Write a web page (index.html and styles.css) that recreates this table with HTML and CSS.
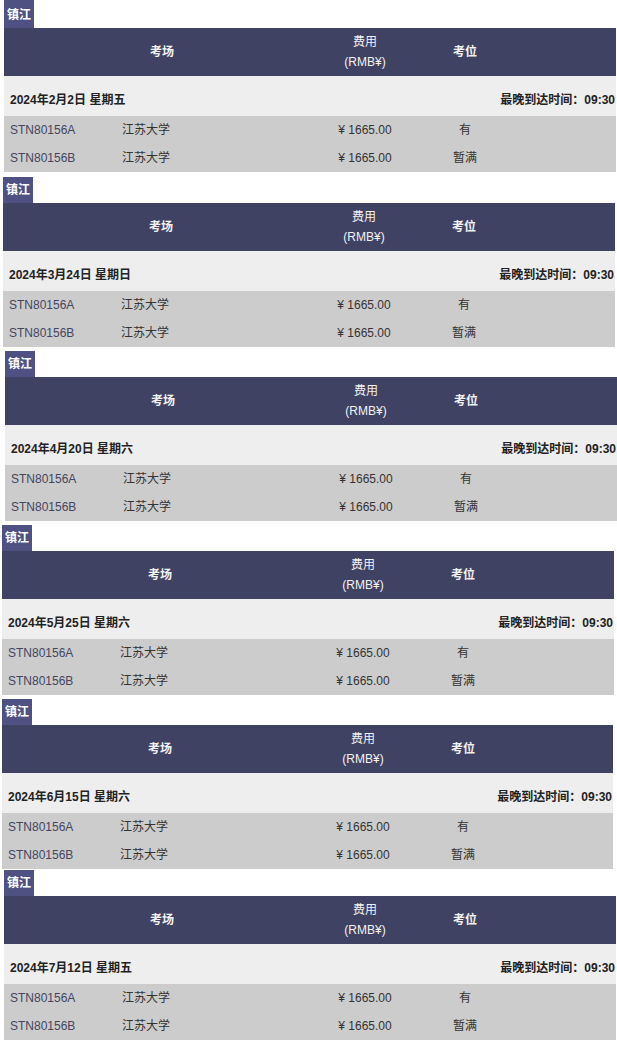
FILE: index.html
```html
<!doctype html>
<html lang="zh-CN">
  <head>
    <meta charset="UTF-8" />
    <meta name="viewport" content="width=device-width, initial-scale=1.0" />
    <title>考试日期</title>
    <link rel="stylesheet" href="styles.css">
  </head>
  <body>
    <section class="region">
      <div class="region-tag">镇江</div>
      <table class="exam-table">
        <colgroup><col class="col-code"><col class="col-name"><col class="col-fee"><col class="col-seat"><col></colgroup>
        <thead>
          <tr><th colspan="2">考场</th><th>费用<br>(RMB¥)</th><th>考位</th><th></th></tr>
        </thead>
        <tbody>
          <tr class="date-row"><td colspan="3">2024年2月2日 星期五</td><td colspan="2" class="deadline">最晚到达时间：09:30</td></tr>
          <tr><td class="code">STN80156A</td><td>江苏大学</td><td class="center">¥ 1665.00</td><td class="center">有</td><td></td></tr>
          <tr><td class="code">STN80156B</td><td>江苏大学</td><td class="center">¥ 1665.00</td><td class="center">暂满</td><td></td></tr>
        </tbody>
      </table>
    </section>

    <section class="region">
      <div class="region-tag">镇江</div>
      <table class="exam-table">
        <colgroup><col class="col-code"><col class="col-name"><col class="col-fee"><col class="col-seat"><col></colgroup>
        <thead>
          <tr><th colspan="2">考场</th><th>费用<br>(RMB¥)</th><th>考位</th><th></th></tr>
        </thead>
        <tbody>
          <tr class="date-row"><td colspan="3">2024年3月24日 星期日</td><td colspan="2" class="deadline">最晚到达时间：09:30</td></tr>
          <tr><td class="code">STN80156A</td><td>江苏大学</td><td class="center">¥ 1665.00</td><td class="center">有</td><td></td></tr>
          <tr><td class="code">STN80156B</td><td>江苏大学</td><td class="center">¥ 1665.00</td><td class="center">暂满</td><td></td></tr>
        </tbody>
      </table>
    </section>

    <section class="region">
      <div class="region-tag">镇江</div>
      <table class="exam-table">
        <colgroup><col class="col-code"><col class="col-name"><col class="col-fee"><col class="col-seat"><col></colgroup>
        <thead>
          <tr><th colspan="2">考场</th><th>费用<br>(RMB¥)</th><th>考位</th><th></th></tr>
        </thead>
        <tbody>
          <tr class="date-row"><td colspan="3">2024年4月20日 星期六</td><td colspan="2" class="deadline">最晚到达时间：09:30</td></tr>
          <tr><td class="code">STN80156A</td><td>江苏大学</td><td class="center">¥ 1665.00</td><td class="center">有</td><td></td></tr>
          <tr><td class="code">STN80156B</td><td>江苏大学</td><td class="center">¥ 1665.00</td><td class="center">暂满</td><td></td></tr>
        </tbody>
      </table>
    </section>

    <section class="region">
      <div class="region-tag">镇江</div>
      <table class="exam-table">
        <colgroup><col class="col-code"><col class="col-name"><col class="col-fee"><col class="col-seat"><col></colgroup>
        <thead>
          <tr><th colspan="2">考场</th><th>费用<br>(RMB¥)</th><th>考位</th><th></th></tr>
        </thead>
        <tbody>
          <tr class="date-row"><td colspan="3">2024年5月25日 星期六</td><td colspan="2" class="deadline">最晚到达时间：09:30</td></tr>
          <tr><td class="code">STN80156A</td><td>江苏大学</td><td class="center">¥ 1665.00</td><td class="center">有</td><td></td></tr>
          <tr><td class="code">STN80156B</td><td>江苏大学</td><td class="center">¥ 1665.00</td><td class="center">暂满</td><td></td></tr>
        </tbody>
      </table>
    </section>

    <section class="region">
      <div class="region-tag">镇江</div>
      <table class="exam-table">
        <colgroup><col class="col-code"><col class="col-name"><col class="col-fee"><col class="col-seat"><col></colgroup>
        <thead>
          <tr><th colspan="2">考场</th><th>费用<br>(RMB¥)</th><th>考位</th><th></th></tr>
        </thead>
        <tbody>
          <tr class="date-row"><td colspan="3">2024年6月15日 星期六</td><td colspan="2" class="deadline">最晚到达时间：09:30</td></tr>
          <tr><td class="code">STN80156A</td><td>江苏大学</td><td class="center">¥ 1665.00</td><td class="center">有</td><td></td></tr>
          <tr><td class="code">STN80156B</td><td>江苏大学</td><td class="center">¥ 1665.00</td><td class="center">暂满</td><td></td></tr>
        </tbody>
      </table>
    </section>

    <section class="region">
      <div class="region-tag">镇江</div>
      <table class="exam-table">
        <colgroup><col class="col-code"><col class="col-name"><col class="col-fee"><col class="col-seat"><col></colgroup>
        <thead>
          <tr><th colspan="2">考场</th><th>费用<br>(RMB¥)</th><th>考位</th><th></th></tr>
        </thead>
        <tbody>
          <tr class="date-row"><td colspan="3">2024年7月12日 星期五</td><td colspan="2" class="deadline">最晚到达时间：09:30</td></tr>
          <tr><td class="code">STN80156A</td><td>江苏大学</td><td class="center">¥ 1665.00</td><td class="center">有</td><td></td></tr>
          <tr><td class="code">STN80156B</td><td>江苏大学</td><td class="center">¥ 1665.00</td><td class="center">暂满</td><td></td></tr>
        </tbody>
      </table>
    </section>
  </body>
</html>
```

FILE: styles.css
```css
body {
  margin: 0;
  font-family: "Liberation Sans", Arial, "Noto Sans CJK SC", sans-serif;
  font-size: 12px;
  color: #333;
  background-color: #fff;
}
.region {
  width: 612px;
  margin: 4px 0 0 4px;
}
.region:nth-child(1) { margin-top: 0; }
.region:nth-child(2) { margin-top: 5px; margin-left: 3px; }
.region:nth-child(3) { margin-left: 5px; }
.region:nth-child(4) { margin-left: 2px; }
.region:nth-child(5) { margin-left: 2px; width: 611px; }
.region:nth-child(6) { margin-top: 1px; }
.region-tag {
  display: inline-block;
  vertical-align: top;
  height: 26px;
  line-height: 26px;
  padding: 0 3px;
  background-color: #4e5182;
  color: #fff;
  font-weight: bold;
}
.region:nth-child(1) .region-tag {
  height: 28px;
  line-height: 30px;
}
.exam-table {
  width: 100%;
  table-layout: fixed;
  border-collapse: collapse;
  border-spacing: 0;
}
.col-code { width: 112px; }
.col-name { width: 204px; }
.col-fee { width: 90px; }
.col-seat { width: 110px; }
.exam-table th {
  height: 48px;
  padding: 0;
  line-height: 20px;
  background-color: #404263;
  color: #f2f2f2;
  font-weight: bold;
  text-align: center;
  vertical-align: middle;
}
.exam-table th:nth-child(2) {
  font-weight: normal;
}
.exam-table td {
  height: 28px;
  padding: 0 0 0 6px;
  line-height: 28px;
  background-color: #cccccc;
  white-space: nowrap;
}
.exam-table td.code {
  color: #454560;
}
.exam-table td.center {
  padding: 0;
  text-align: center;
}
.exam-table .date-row td {
  height: 20px;
  padding: 14px 0 6px 6px;
  line-height: 20px;
  background-color: #eeeeee;
  color: #222;
  font-weight: bold;
}
.exam-table .date-row td.deadline {
  padding-right: 1px;
  text-align: right;
}
```
